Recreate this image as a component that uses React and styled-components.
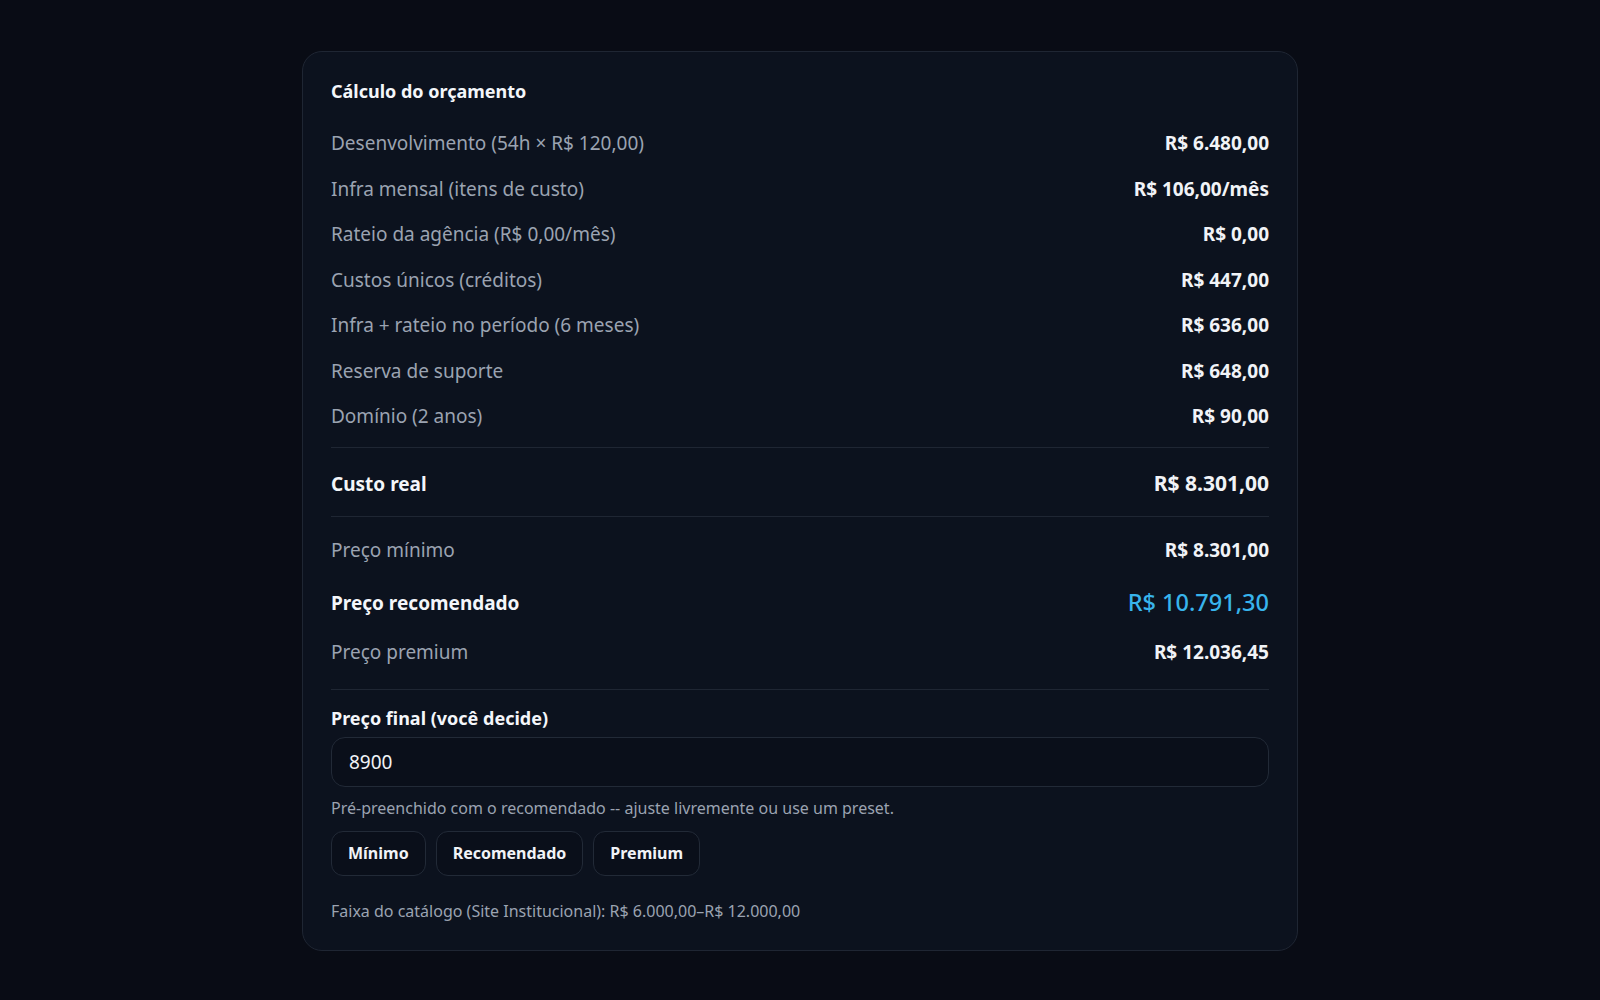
import React from 'react';
import styled, { createGlobalStyle } from 'styled-components';

const GlobalStyle = createGlobalStyle`
  html, body {
    margin: 0;
    padding: 0;
    background: #090c15;
    font-family: "Noto Sans", "Open Sans", "Liberation Sans", sans-serif;
  }
  * { box-sizing: border-box; }
`;

const Page = styled.div`
  min-height: 1000px;
  padding-top: 51px;
  display: flex;
  justify-content: center;
  align-items: flex-start;
`;

const Card = styled.section`
  width: 996px;
  background: #0c121e;
  border: 1px solid #1f2633;
  border-radius: 20px;
  padding: 27px 28px 28px;
  color: #f1f3f7;
`;

const Title = styled.h2`
  margin: 0 0 26px;
  font-size: 18px;
  line-height: 24px;
  font-weight: 700;
  color: #f4f6fa;
`;

const List = styled.div`
  display: flex;
  flex-direction: column;
  gap: ${(p) => p.$gap || 17.5}px;
`;

const Row = styled.div`
  display: flex;
  justify-content: space-between;
  align-items: center;
  line-height: 28px;
  margin-top: ${(p) => p.$mt || 0}px;
`;

const Label = styled.span`
  font-size: 19px;
  font-weight: ${(p) => (p.$strong ? 700 : 400)};
  color: ${(p) => (p.$strong ? '#f4f6fa' : '#9ba3b1')};
`;

const Value = styled.span`
  font-size: ${(p) => p.$size || 19}px;
  font-weight: ${(p) => (p.$accent ? 500 : 700)};
  color: ${(p) => (p.$accent ? '#38b4ec' : '#f1f3f7')};
  line-height: ${(p) => (p.$size ? p.$size + 8 : 28)}px;
`;

const Divider = styled.hr`
  border: 0;
  height: 1px;
  background: #1f2633;
  margin: ${(p) => p.$m || '9px 0'};
`;

const FieldLabel = styled.div`
  font-size: 18px;
  font-weight: 700;
  line-height: 24px;
  color: #f4f6fa;
  margin-bottom: 7px;
`;

const Input = styled.input`
  display: block;
  width: 100%;
  height: 50px;
  background: #0a0f1a;
  border: 1px solid #222a37;
  border-radius: 14px;
  padding: 0 17px;
  font-family: inherit;
  font-size: 19px;
  color: #f1f3f7;
  outline: none;
`;

const Hint = styled.p`
  margin: 10px 0 0;
  font-size: 16px;
  line-height: 22px;
  color: #9ba3b1;
`;

const Presets = styled.div`
  display: flex;
  gap: 10px;
  margin-top: 12px;
`;

const PresetButton = styled.button`
  height: 45px;
  padding: 0 16px;
  background: #0a0f1a;
  border: 1px solid #222a37;
  border-radius: 12px;
  font-family: inherit;
  font-size: 16px;
  font-weight: 700;
  color: #f1f3f7;
  cursor: pointer;
`;

const Footnote = styled.p`
  margin: 24px 0 0;
  font-size: 16px;
  line-height: 22px;
  color: #9ba3b1;
`;

const items = [
  ['Desenvolvimento (54h × R$ 120,00)', 'R$ 6.480,00'],
  ['Infra mensal (itens de custo)', 'R$ 106,00/mês'],
  ['Rateio da agência (R$ 0,00/mês)', 'R$ 0,00'],
  ['Custos únicos (créditos)', 'R$ 447,00'],
  ['Infra + rateio no período (6 meses)', 'R$ 636,00'],
  ['Reserva de suporte', 'R$ 648,00'],
  ['Domínio (2 anos)', 'R$ 90,00'],
];

export default function App() {
  return (
    <>
      <GlobalStyle />
      <Page>
        <Card>
          <Title>Cálculo do orçamento</Title>
          <List>
            {items.map(([label, value]) => (
              <Row key={label}>
                <Label>{label}</Label>
                <Value>{value}</Value>
              </Row>
            ))}
          </List>

          <Divider $m="17px 0 21px" />
          <Row>
            <Label $strong>Custo real</Label>
            <Value $size={21}>R$ 8.301,00</Value>
          </Row>
          <Divider $m="18px 0 19px" />

          <List $gap={19}>
            <Row>
              <Label>Preço mínimo</Label>
              <Value>R$ 8.301,00</Value>
            </Row>
            <Row $mt={4}>
              <Label $strong>Preço recomendado</Label>
              <Value $size={23.5} $accent>R$ 10.791,30</Value>
            </Row>
            <Row>
              <Label>Preço premium</Label>
              <Value>R$ 12.036,45</Value>
            </Row>
          </List>
          <Divider $m="23px 0 16px" />

          <FieldLabel>Preço final (você decide)</FieldLabel>
          <Input defaultValue="8900" />
          <Hint>Pré-preenchido com o recomendado -- ajuste livremente ou use um preset.</Hint>
          <Presets>
            <PresetButton>Mínimo</PresetButton>
            <PresetButton>Recomendado</PresetButton>
            <PresetButton>Premium</PresetButton>
          </Presets>
          <Footnote>Faixa do catálogo (Site Institucional): R$ 6.000,00–R$ 12.000,00</Footnote>
        </Card>
      </Page>
    </>
  );
}
